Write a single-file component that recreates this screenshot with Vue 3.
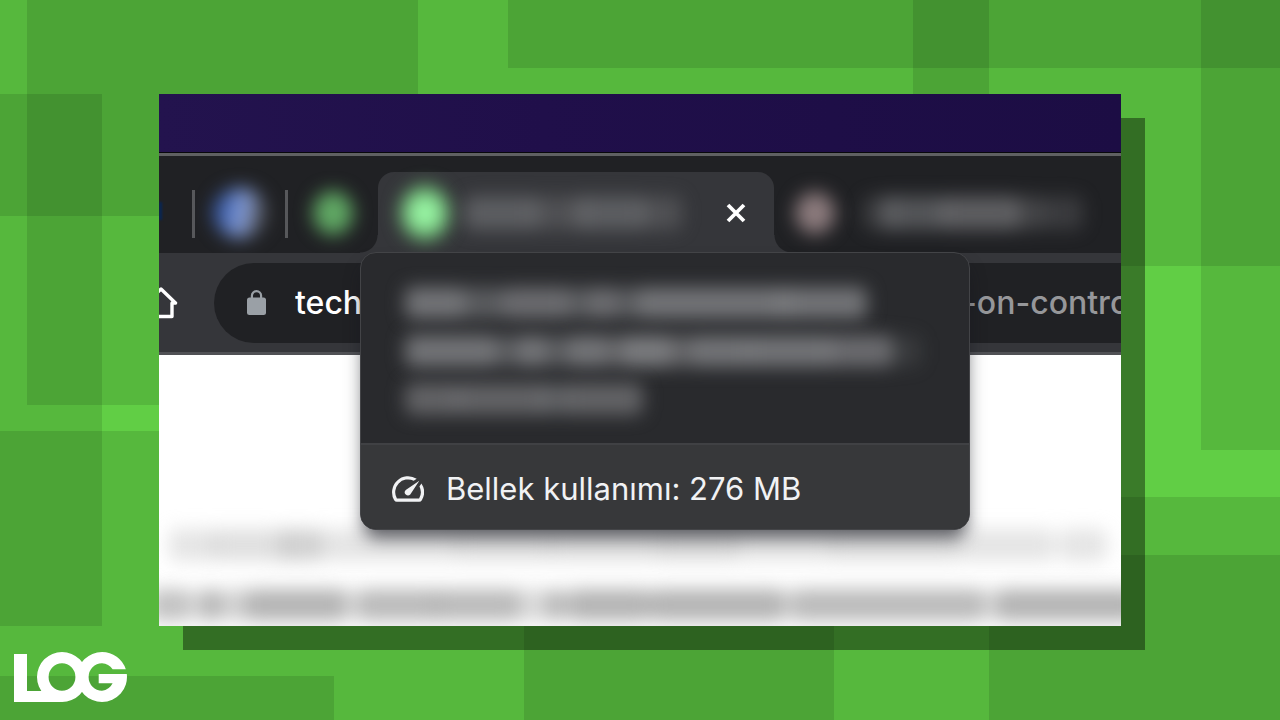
<script setup>
const blocks = [
  [0, 0, 508, 216], [508, 0, 772, 266], [508, 0, 772, 68], [913, 0, 76, 266],
  [1201, 0, 79, 450], [27, 0, 391, 405], [0, 94, 102, 532], [0, 431, 834, 289],
  [524, 497, 756, 223], [989, 555, 291, 165], [0, 676, 334, 44],
]
const activeTitle = [[0, 74, 6], [66, 56, 4], [112, 70, 6], [176, 42, 4]]
const nextTitle = [[0, 34, 3], [18, 66, 6], [78, 78, 7], [150, 32, 4], [180, 40, 3]]
const headline = [
  [[0, 60, 9], [54, 48, 6], [98, 66, 8], [158, 32, 6], [184, 28, 8], [208, 30, 6], [232, 156, 9], [370, 92, 9]],
  [[0, 92, 9], [88, 28, 6], [112, 30, 9], [138, 28, 6], [162, 40, 9], [196, 26, 7], [216, 52, 10], [262, 30, 7], [286, 62, 9], [340, 88, 9], [420, 68, 8], [484, 32, 2]],
  [[0, 56, 7], [50, 94, 7], [136, 28, 6], [158, 80, 7]],
]
const article = [
  [[10, 48, 5], [52, 80, 6], [118, 46, 9], [160, 140, 5], [295, 100, 6], [390, 115, 6], [500, 80, 7], [575, 100, 5], [670, 130, 6], [796, 100, 5], [900, 48, 5]],
  [[-10, 42, 8], [30, 16, 4], [42, 20, 10], [62, 28, 6], [86, 102, 10], [180, 22, 4], [198, 84, 9], [272, 88, 9], [350, 40, 5], [388, 18, 10], [408, 84, 10], [490, 136, 10], [620, 16, 4], [632, 194, 9], [820, 20, 4], [836, 144, 10]],
]
const bar = ([x, w, o]) => ({ left: x + 'px', width: w + 'px', opacity: o / 10 })
</script>

<template>
  <main class="stage">
    <svg class="backdrop" viewBox="0 0 1280 720" preserveAspectRatio="none" shape-rendering="crispEdges" aria-hidden="true">
      <rect v-for="(b, i) in blocks" :key="i" :x="b[0]" :y="b[1]" :width="b[2]" :height="b[3]" fill="#000" fill-opacity="0.105" />
    </svg>

    <section class="window">
      <div class="desktop"></div>
      <div class="strip">
        <div class="edge-tab"><i class="glow navy"></i></div>
        <span class="sep"></span>
        <div class="pinned"><i class="glow blue"></i></div>
        <span class="sep"></span>
        <div class="pinned"><i class="glow green"></i></div>
        <div class="tab">
          <i class="glow mint"></i>
          <div class="smear title"><i v-for="(b, i) in activeTitle" :key="i" :style="bar(b)"></i></div>
          <button class="close" type="button" aria-label="Kapat">
            <svg width="22" height="22" viewBox="0 0 22 22"><path d="M3 3L19 19M19 3L3 19" stroke="#fff" stroke-width="3.8" /></svg>
          </button>
        </div>
        <div class="next">
          <i class="glow rose"></i>
          <div class="smear title"><i v-for="(b, i) in nextTitle" :key="i" :style="bar(b)"></i></div>
        </div>
      </div>

      <div class="toolbar">
        <button class="home" type="button" aria-label="Ana sayfa">
          <svg width="20" height="34" viewBox="0 0 20 34" fill="none" stroke="#fff" stroke-width="3.4" stroke-linejoin="round">
            <path d="M-13 17L2 3L16.5 17H13V30.5H-9" />
          </svg>
        </button>
        <label class="address">
          <svg width="20" height="26" viewBox="0 0 20 26">
            <rect x="0" y="7.5" width="19" height="17.5" rx="2.5" fill="#9aa0a6" />
            <path d="M4.9 9V5.8a4.6 4.6 0 0 1 9.2 0V9" fill="none" stroke="#9aa0a6" stroke-width="2.2" />
          </svg>
          <input type="text" value="tech" aria-label="Adres" />
          <span class="path">-on-contro</span>
        </label>
      </div>

      <div class="page">
        <div v-for="(line, n) in article" :key="n" class="smear line"><i v-for="(b, i) in line" :key="i" :style="bar(b)"></i></div>
      </div>

      <aside class="card">
        <div class="card-head">
          <div v-for="(line, n) in headline" :key="n" class="smear row"><i v-for="(b, i) in line" :key="i" :style="bar(b)"></i></div>
        </div>
        <div class="card-foot">
          <svg width="32" height="26" viewBox="2 4 20 16" fill="#f1f2f4">
            <path d="M20.38 8.57l-1.23 1.85a8 8 0 0 1-.22 7.58H5.07A8 8 0 0 1 15.58 6.85l1.85-1.23A10 10 0 0 0 3.35 19a2 2 0 0 0 1.72 1h13.85a2 2 0 0 0 1.74-1 10 10 0 0 0-.27-10.44z" />
            <path d="M10.59 15.41a2 2 0 0 0 2.83 0l5.66-8.49-8.49 5.66a2 2 0 0 0 0 2.83z" />
          </svg>
          <span>Bellek kullanımı: 276 MB</span>
        </div>
      </aside>
    </section>

    <svg class="logo" width="113" height="50" viewBox="0 0 113 50" fill="#fff" role="img" aria-label="LOG">
      <path d="M0 2H13V39H28L48 50H0Z" />
      <path fill-rule="evenodd" d="M48 0A25 25 0 0 1 48 50A25 25 0 0 1 48 0ZM48 11.2A13.4 13.8 0 1 0 48 38.8A13.4 13.8 0 1 0 48 11.2Z" />
      <path d="M111.8 17.3A25 25 0 0 0 88 0A25 25 0 0 0 88 50A25 25 0 0 0 112.8 22H84.7V31.3H98.6A13.4 13.8 0 0 1 88 38.8A13.4 13.8 0 0 1 88 11.2A13.4 13.8 0 0 1 98.6 17.3Z" />
    </svg>
  </main>
</template>

<style>
body { margin: 0; }
</style>

<style scoped>
.stage {
  position: relative;
  box-sizing: border-box;
  min-height: 100vh;
  padding: 94px 159px;
  display: grid;
  background: #61ce45;
  overflow: hidden;
  font-family: Inter, "Liberation Sans", sans-serif;
}
.backdrop { position: absolute; inset: 0; width: 100%; height: 100%; }
.logo { position: absolute; left: 14px; bottom: 18px; }
.window {
  position: relative;
  display: flex;
  flex-direction: column;
  min-width: 0;
  background: #fff;
  box-shadow: 24px 24px 0 rgba(0, 0, 0, 0.4);
}
.desktop {
  height: 58px;
  background: linear-gradient(90deg, #23134e, #200f4a 40%, #1c0d44);
  border-bottom: 1px solid #08070c;
}
.strip {
  display: flex;
  align-items: center;
  height: 97px;
  border-top: 3px solid #5f6062;
  background: #202124;
  overflow: hidden;
}
.edge-tab { width: 33px; flex: none; }
.sep { width: 3px; height: 48px; flex: none; background: #57585b; margin-top: 18px; }
.pinned { display: grid; place-items: center; width: 90px; flex: none; padding-top: 16px; }
.glow { display: block; flex: none; border-radius: 50%; filter: blur(9px); }
.navy { width: 3px; height: 18px; margin-top: 12px; background: #082654; filter: blur(1px); border-radius: 0; }
.blue { width: 54px; height: 50px; background: linear-gradient(100deg, #3a5ca8 20%, #8aa2dc 55%, #4a4b50 85%); }
.green { width: 40px; height: 44px; background: #60a864; }
.mint { width: 50px; height: 56px; background: radial-gradient(circle, #a0ffac 20%, #57995c 80%); }
.rose { width: 40px; height: 42px; background: #8c7b7d; }
.tab {
  position: relative;
  align-self: flex-end;
  box-sizing: border-box;
  display: flex;
  align-items: center;
  gap: 14px;
  flex: none;
  width: 396px;
  height: 81px;
  padding: 0 27px 0 22px;
  border-radius: 16px 16px 0 0;
  background: #35363a;
}
.tab::before, .tab::after {
  content: "";
  position: absolute;
  bottom: 0;
  width: 18px;
  height: 18px;
}
.tab::before { right: 100%; background: radial-gradient(circle at 0 0, transparent 17px, #35363a 18px); }
.tab::after { left: 100%; background: radial-gradient(circle at 100% 0, transparent 17px, #35363a 18px); }
.close { display: grid; padding: 0; border: 0; background: none; }
.next { display: flex; align-items: center; gap: 28px; flex: 1; min-width: 0; padding: 16px 0 0 21px; }
.smear { position: relative; filter: blur(9px); }
.smear i { position: absolute; top: 0; bottom: 0; border-radius: 8px; background: #77787b; }
.title { flex: 1; height: 34px; }
.toolbar {
  display: flex;
  align-items: center;
  height: 99px;
  background: #35363a;
  border-bottom: 3px solid #505155;
}
.home { display: grid; width: 55px; flex: none; padding: 0; border: 0; background: none; justify-items: start; }
.address {
  display: flex;
  align-items: center;
  flex: 1;
  min-width: 0;
  height: 80px;
  padding-left: 33px;
  border-radius: 40px 0 0 40px;
  background: #202124;
  overflow: hidden;
  box-sizing: border-box;
}
.address svg { flex: none; }
.address input {
  flex: 1;
  min-width: 0;
  margin-left: 28px;
  padding: 0;
  border: 0;
  outline: 0;
  background: none;
  color: #fff;
  font: 500 32px/40px Inter, "Liberation Sans", sans-serif;
}
.path { width: 159px; flex: none; color: #96979a; font-size: 32px; font-weight: 500; line-height: 40px; white-space: nowrap; overflow: hidden; }
.page { flex: 1; display: flex; flex-direction: column; gap: 28px; padding-top: 174px; overflow: hidden; }
.line { height: 32px; }
.line i { background: #b4b4b4; }
.line:first-child i { background: #ccc; }
.card {
  position: absolute;
  top: 158px;
  left: 201px;
  box-sizing: border-box;
  width: 610px;
  border: 1px solid #434447;
  border-radius: 16px;
  overflow: hidden;
  background: #292a2d;
  box-shadow: 0 12px 18px -4px rgba(20, 22, 30, 0.7);
}
.card-head { display: flex; flex-direction: column; gap: 16px; padding: 34px 44px 28px; height: 128px; }
.row { height: 32px; }
.row i { background: #7a7b7e; }
.card-foot {
  box-sizing: border-box;
  display: flex;
  align-items: center;
  gap: 22px;
  height: 86px;
  padding: 4px 0 0 31px;
  border-top: 2px solid #404144;
  background: #37383a;
  color: #f1f2f4;
  font-size: 31px;
  line-height: 40px;
  white-space: nowrap;
}
</style>
